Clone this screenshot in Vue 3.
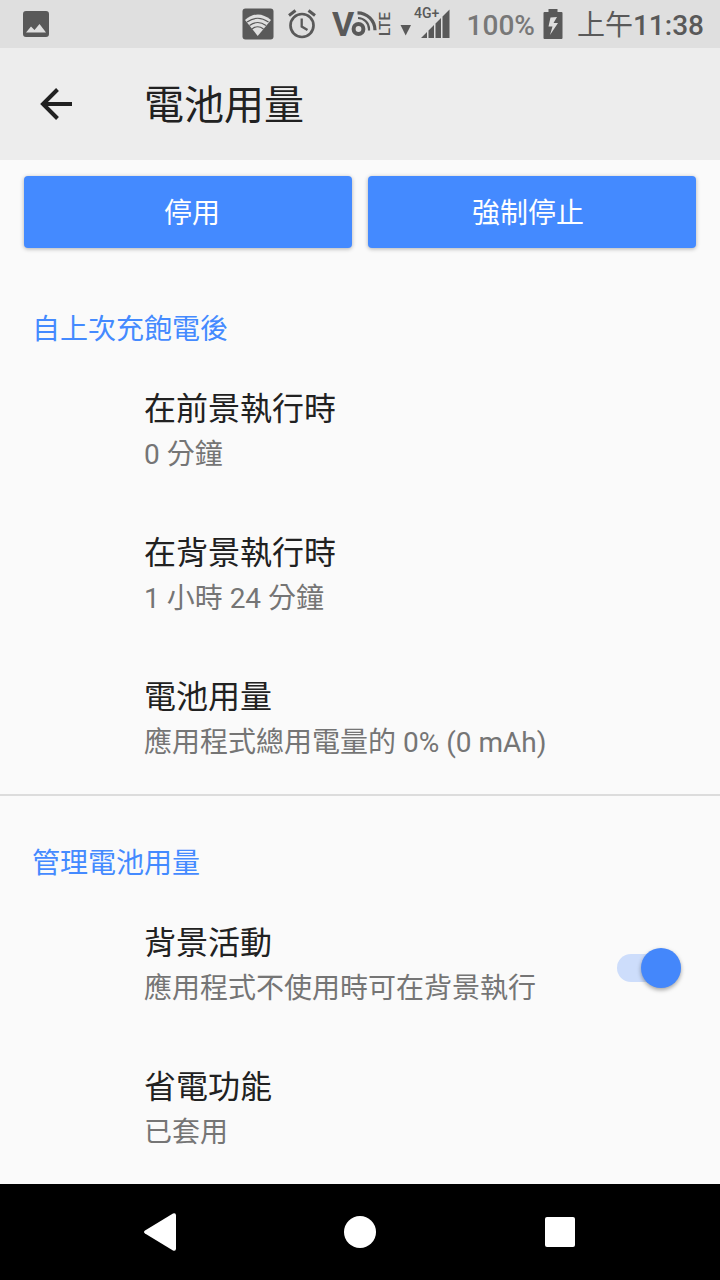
<script setup>
import { ref } from 'vue'

const background = ref(true)

const usage = [
  { title: '在前景執行時', summary: '0 分鐘' },
  { title: '在背景執行時', summary: '1 小時 24 分鐘' },
  { title: '電池用量', summary: '應用程式總用電量的 0% (0 mAh)' },
]
</script>

<template>
  <div class="screen" lang="zh-TW">
    <div class="status">
      <svg class="photo" width="26" height="26" viewBox="0 0 26 26" aria-hidden="true">
        <path fill="#595959" fill-rule="evenodd" d="M3 0H23Q26 0 26 3V23Q26 26 23 26H3Q0 26 0 23V3Q0 0 3 0ZM3 21.500H23L16.500 13L11.500 19L8 15.500Z" />
      </svg>
      <svg class="wifi" width="32" height="32" viewBox="0 0 32 32" aria-hidden="true">
        <rect x="0.500" y="0.500" width="31" height="31" rx="3" fill="#595959" />
        <path fill="#dfdfdf" d="M3 12Q15.700 1 29 12L15.700 28Z" />
        <g fill="none" stroke="#595959" stroke-width="1.200">
          <path d="M5 14Q15.700 6.500 26.500 14" />
          <path d="M7.500 17.500Q15.700 11.500 24 17.500" />
          <path d="M10 21Q15.700 16.500 21.500 21" />
        </g>
      </svg>
      <svg class="alarm" width="30" height="30" viewBox="0 0 30 30" fill="none" stroke="#595959" aria-hidden="true">
        <circle cx="15" cy="16.500" r="11.500" stroke-width="2.700" />
        <path d="M2 6.500L8.500 1.500M21.500 1.500L28 6.500" stroke-width="3" />
        <path d="M14.700 9.500V17.500L20.500 21" stroke-width="2.300" />
      </svg>
      <svg class="volte" width="64" height="48" viewBox="0 -8 64 48" aria-hidden="true">
        <text x="0" y="28" font-family="Roboto, sans-serif" font-size="34" font-weight="700" fill="#595959">V</text>
        <g fill="none" stroke="#595959">
          <circle cx="26.500" cy="21" r="4.900" stroke-width="4" />
          <path d="M26 10A11 11 0 0 1 37 21V22.500" stroke-width="2.200" />
          <path d="M25.500 4.800A17.500 17.500 0 0 1 43 22.300" stroke-width="3.200" />
        </g>
        <text transform="translate(58 28) rotate(-90)" font-family="Roboto, sans-serif" font-size="15" font-weight="500" fill="#595959">LTE</text>
      </svg>
      <svg class="signal" width="52" height="48" viewBox="0 -8 52 48" fill="#595959" aria-hidden="true">
        <path d="M0.500 17H11L5.700 27.500Z" />
        <text x="14" y="10" font-family="Roboto, sans-serif" font-size="14" font-weight="500">4G+</text>
        <path d="M21 30L27 24V30ZM28.500 22.500L34 17V30H28.500ZM35.500 15.500L41 10V30H35.500ZM42.500 8.500L49.500 1.500V30H42.500Z" />
      </svg>
      <span class="percent">100%</span>
      <svg class="battery" width="20" height="30" viewBox="0 0 20 30" aria-hidden="true">
        <path fill="#595959" fill-rule="evenodd" d="M5.500 0H14.500V3H18.500Q19.500 3 19.500 4V29Q19.500 30 18.500 30H1.500Q0.500 30 0.500 29V4Q0.500 3 1.500 3H5.500ZM7.500 8.500L5.500 17.500H9.500L7 26L15 14H10.500L14 8Z" />
      </svg>
      <span class="clock"><span class="period">上午</span>11:38</span>
    </div>

    <header class="bar">
      <button class="back" type="button" aria-label="返回">
        <svg width="32" height="32" viewBox="0 0 32 32" fill="none" stroke="#212121" stroke-width="4" aria-hidden="true">
          <path d="M32 16H3M17.500 1.500L3 16L17.500 30.500" />
        </svg>
      </button>
      <h1>電池用量</h1>
    </header>

    <main>
      <div class="actions">
        <button type="button">停用</button>
        <button type="button">強制停止</button>
      </div>

      <section>
        <h2>自上次充飽電後</h2>
        <div v-for="item in usage" :key="item.title" class="row">
          <div class="text">
            <h3>{{ item.title }}</h3>
            <p>{{ item.summary }}</p>
          </div>
        </div>
      </section>

      <section>
        <h2>管理電池用量</h2>
        <div class="row">
          <label class="text" for="background">
            <span class="title">背景活動</span>
            <span class="summary">應用程式不使用時可在背景執行</span>
          </label>
          <input id="background" v-model="background" class="switch" type="checkbox" role="switch" />
        </div>
        <div class="row">
          <div class="text">
            <h3>省電功能</h3>
            <p>已套用</p>
          </div>
        </div>
      </section>
    </main>

    <nav class="nav">
      <button type="button" aria-label="返回上一頁">
        <svg width="40" height="40" viewBox="0 0 40 40" fill="#fff" aria-hidden="true">
          <path d="M5 18.500L33 1.500Q36 0.500 36 3.500V36.500Q36 39.500 33 38.500L5 21.500Q3 20 5 18.500Z" />
        </svg>
      </button>
      <button type="button" aria-label="主畫面">
        <svg width="40" height="40" viewBox="0 0 40 40" fill="#fff" aria-hidden="true"><circle cx="20" cy="20" r="16" /></svg>
      </button>
      <button type="button" aria-label="最近使用">
        <svg width="40" height="40" viewBox="0 0 40 40" fill="#fff" aria-hidden="true"><rect x="5" y="5" width="30" height="30" rx="2" /></svg>
      </button>
    </nav>
  </div>
</template>

<style>
body {
  margin: 0;
  background: #fafafa;
}
</style>

<style scoped>
.screen {
  display: flex;
  flex-direction: column;
  min-height: 100vh;
  background: #fafafa;
  color: #212121;
  font-family: Roboto, "Noto Sans CJK TC", sans-serif;
}
h1, h2, h3, p {
  margin: 0;
  font-weight: 400;
}
button {
  border: 0;
  font: inherit;
}
svg {
  display: block;
  flex: none;
}
.status {
  display: flex;
  align-items: center;
  height: 48px;
  padding: 0 16px 0 23px;
  background: #dfdfdf;
  color: #595959;
  font-size: 28px;
  line-height: 40px;
  white-space: nowrap;
}
.photo { margin-right: auto; }
.alarm { margin-left: 13px; }
.volte { margin-left: 15px; }
.signal { margin-left: 4px; }
.percent,
.clock {
  padding-top: 3px;
  font-weight: 500;
}
.percent {
  margin-left: 15px;
  color: #787878;
}
.battery { margin-left: 8px; }
.clock { margin-left: 14px; }
.period { font-weight: 400; }
.bar {
  display: flex;
  align-items: center;
  height: 112px;
  background: #ededed;
}
.back {
  display: grid;
  place-items: center;
  width: 112px;
  height: 112px;
  padding: 0;
  background: none;
}
h1 {
  margin-left: 32px;
  padding-top: 4px;
  font-size: 40px;
  line-height: 56px;
}
main { flex: 1; }
.actions {
  display: grid;
  grid-template-columns: 1fr 1fr;
  gap: 16px;
  padding: 16px 24px;
}
.actions button {
  height: 72px;
  padding: 0 0 2px 8px;
  border-radius: 4px;
  background: #448aff;
  box-shadow: 0 1px 4px rgba(0, 0, 0, 0.3);
  color: #fff;
  font-size: 28px;
}
.actions button:last-child { padding: 0 8px 2px 0; }
section { padding-bottom: 2px; }
section + section {
  padding-top: 2px;
  border-top: 2px solid #dcdcdc;
}
h2 {
  padding: 46px 32px 10px;
  color: #448aff;
  font-size: 28px;
  line-height: 40px;
}
.row {
  display: flex;
  align-items: center;
  height: 144px;
  padding: 0 39px 0 144px;
}
.text {
  flex: 1;
  padding-bottom: 6px;
}
.title, .summary { display: block; }
h3, .title {
  font-size: 32px;
  line-height: 52px;
}
p, .summary {
  color: #757575;
  font-size: 28px;
  line-height: 40px;
}
.switch {
  display: grid;
  align-items: center;
  width: 64px;
  height: 40px;
  margin: 4px 0 0;
  appearance: none;
}
.switch::before,
.switch::after {
  grid-area: 1 / 1;
  content: "";
}
.switch::before {
  height: 28px;
  border-radius: 14px;
  background: #cdddfb;
}
.switch::after {
  justify-self: end;
  width: 40px;
  height: 40px;
  border-radius: 50%;
  background: #4487fb;
  box-shadow: 0 2px 4px rgba(0, 0, 0, 0.35);
}
.switch:not(:checked)::after {
  justify-self: start;
  background: #f1f1f1;
}
.nav {
  display: flex;
  justify-content: center;
  gap: 104px;
  height: 96px;
  background: #000;
}
.nav button {
  display: grid;
  place-items: center;
  width: 96px;
  padding: 0;
  background: none;
}
</style>
